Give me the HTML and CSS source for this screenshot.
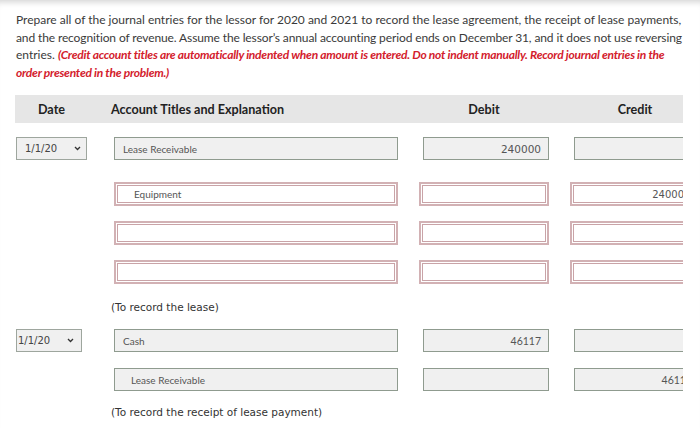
FILE: index.html
```html
<!DOCTYPE html>
<html>
<head>
<meta charset="utf-8">
<link rel="stylesheet" href="styles.css">
</head>
<body>
<div class="page">
  <p class="intro">Prepare all of the journal entries for the lessor for 2020 and 2021 to record the lease agreement, the receipt of lease payments,<br><span class="tight">and the recognition of revenue. Assume the lessor’s annual accounting period ends on December 31, and it does not use reversing</span><br>entries. <em class="note">(Credit account titles are automatically indented when amount is entered. Do not indent manually. Record journal entries in the<br>order presented in the problem.)</em></p>

  <div class="wrap">
    <div class="row head">
      <div class="h-date">Date</div>
      <div class="h-acct">Account Titles and Explanation</div>
      <div class="h-amt">Debit</div>
      <div class="h-amt">Credit</div>
    </div>

    <div class="row r1">
      <div class="cell"><div class="select">1/1/20<svg class="chev" viewBox="0 0 8 6" width="7" height="5"><path d="M1 1.2 L4 4.2 L7 1.2" fill="none" stroke="#333" stroke-width="1.6"/></svg></div></div>
      <div class="cell"><div class="field acct">Lease Receivable</div></div>
      <div class="cell"><div class="field amt dv">240000</div></div>
      <div class="cell"><div class="field amt"></div></div>
    </div>

    <div class="row r2">
      <div class="cell"></div>
      <div class="cell"><div class="pink acct indent">Equipment</div></div>
      <div class="cell"><div class="pink amt"></div></div>
      <div class="cell"><div class="pink amt dv cr">24000</div></div>
    </div>

    <div class="row r3">
      <div class="cell"></div>
      <div class="cell"><div class="pink acct"></div></div>
      <div class="cell"><div class="pink amt"></div></div>
      <div class="cell"><div class="pink amt"></div></div>
    </div>

    <div class="row r3">
      <div class="cell"></div>
      <div class="cell"><div class="pink acct"></div></div>
      <div class="cell"><div class="pink amt"></div></div>
      <div class="cell"><div class="pink amt"></div></div>
    </div>

    <div class="row expl e1">
      <div class="cell"></div>
      <div class="cell explain">(To record the lease)</div>
    </div>

    <div class="row r6">
      <div class="cell"><div class="select narrow">1/1/20<svg class="chev" viewBox="0 0 8 6" width="7" height="5"><path d="M1 1.2 L4 4.2 L7 1.2" fill="none" stroke="#333" stroke-width="1.6"/></svg></div></div>
      <div class="cell"><div class="field acct">Cash</div></div>
      <div class="cell"><div class="field amt">46117</div></div>
      <div class="cell"><div class="field amt"></div></div>
    </div>

    <div class="row r7">
      <div class="cell"></div>
      <div class="cell"><div class="field acct indent2">Lease Receivable</div></div>
      <div class="cell"><div class="field amt"></div></div>
      <div class="cell"><div class="field amt cr2">46117</div></div>
    </div>

    <div class="row expl e2">
      <div class="cell"></div>
      <div class="cell explain">(To record the receipt of lease payment)</div>
    </div>
  </div>
</div>
</body>
</html>
```

FILE: styles.css
```css
html, body {
  margin: 0;
  padding: 0;
  background: #ffffff;
}

.page {
  width: 700px;
  height: 428px;
  overflow: hidden;
  box-sizing: border-box;
  padding: 11px 0 0 0;
  box-shadow: inset 0 7px 6px -5px rgba(0, 0, 0, 0.18);
  font-family: Lato, "Liberation Sans", sans-serif;
  color: #3a3a3a;
}

.intro {
  margin: 0 0 0 16px;
  width: 684px;
  font-size: 12px;
  line-height: 17.5px;
  white-space: nowrap;
}

.tight {
  letter-spacing: -0.12px;
}

.note {
  color: #d3202c;
  font-weight: 700;
  font-style: italic;
  letter-spacing: -0.25px;
}

.wrap {
  margin: 14px 0 0 15px;
  width: 668px;
  overflow: hidden;
}

.row {
  display: grid;
  grid-template-columns: 99px 284px 151px 151px;
  width: 685px;
}

.head {
  height: 28px;
  background: #e6e6e6;
  align-items: center;
  font-weight: 700;
  font-size: 12.6px;
  color: #222;
}

.h-date {
  width: 73px;
  text-align: center;
}

.h-acct {
  margin-left: -3px;
}

.h-amt {
  margin-left: 21px;
  width: 130px;
  text-align: center;
}

.r1 { margin-top: 14px; }
.r2 { margin-top: 22px; }
.r3 { margin-top: 15px; }
.e1 { margin-top: 14px; }
.r6 { margin-top: 13px; }
.r7 { margin-top: 16px; }
.e2 { margin-top: 12px; }

.cell {
  display: flex;
}

.select {
  box-sizing: border-box;
  margin-left: 1px;
  width: 71px;
  height: 23px;
  border: 1px solid #9ea69e;
  background: #f0f0f0;
  display: flex;
  align-items: center;
  justify-content: space-between;
  padding: 0 5px 0 8px;
  font-family: "DejaVu Sans", Verdana, sans-serif;
  font-size: 10px;
  color: #444;
}

.select.narrow {
  width: 66px;
  padding-left: 1px;
  padding-right: 7px;
}

.chev {
  display: block;
}

.field {
  box-sizing: border-box;
  height: 23px;
  border: 1px solid #8f9b8f;
  background: #f0f0f0;
  display: flex;
  align-items: center;
  font-size: 10px;
  color: #555;
}

.pink {
  box-sizing: border-box;
  height: 24px;
  border: 2px solid #d2b1b4;
  box-shadow: inset 0 0 0 1px #ffffff, inset 0 0 0 2px #c9a3a7;
  background: #ffffff;
  display: flex;
  align-items: center;
  font-size: 10px;
  color: #555;
}

.acct {
  width: 284px;
  padding-left: 8px;
}

.acct.indent {
  padding-left: 18px;
}

.acct.indent2 {
  padding-left: 16px;
}

.field.amt {
  margin-left: 25px;
  width: 126px;
  justify-content: flex-end;
  padding-right: 7px;
  font-size: 10.5px;
}

.pink.amt {
  margin-left: 21px;
  width: 130px;
  justify-content: flex-end;
  padding-right: 9px;
}

.pink.amt.cr {
  padding-right: 14px;
}

.field.amt.cr2 {
  padding-right: 7px;
}

.dv {
  font-family: "DejaVu Sans", Verdana, sans-serif;
  font-size: 10px;
}

.explain {
  margin-left: -3px;
  height: 18px;
  align-items: center;
  font-family: "DejaVu Sans", Verdana, sans-serif;
  font-size: 10.5px;
  color: #333;
  white-space: nowrap;
}
```
